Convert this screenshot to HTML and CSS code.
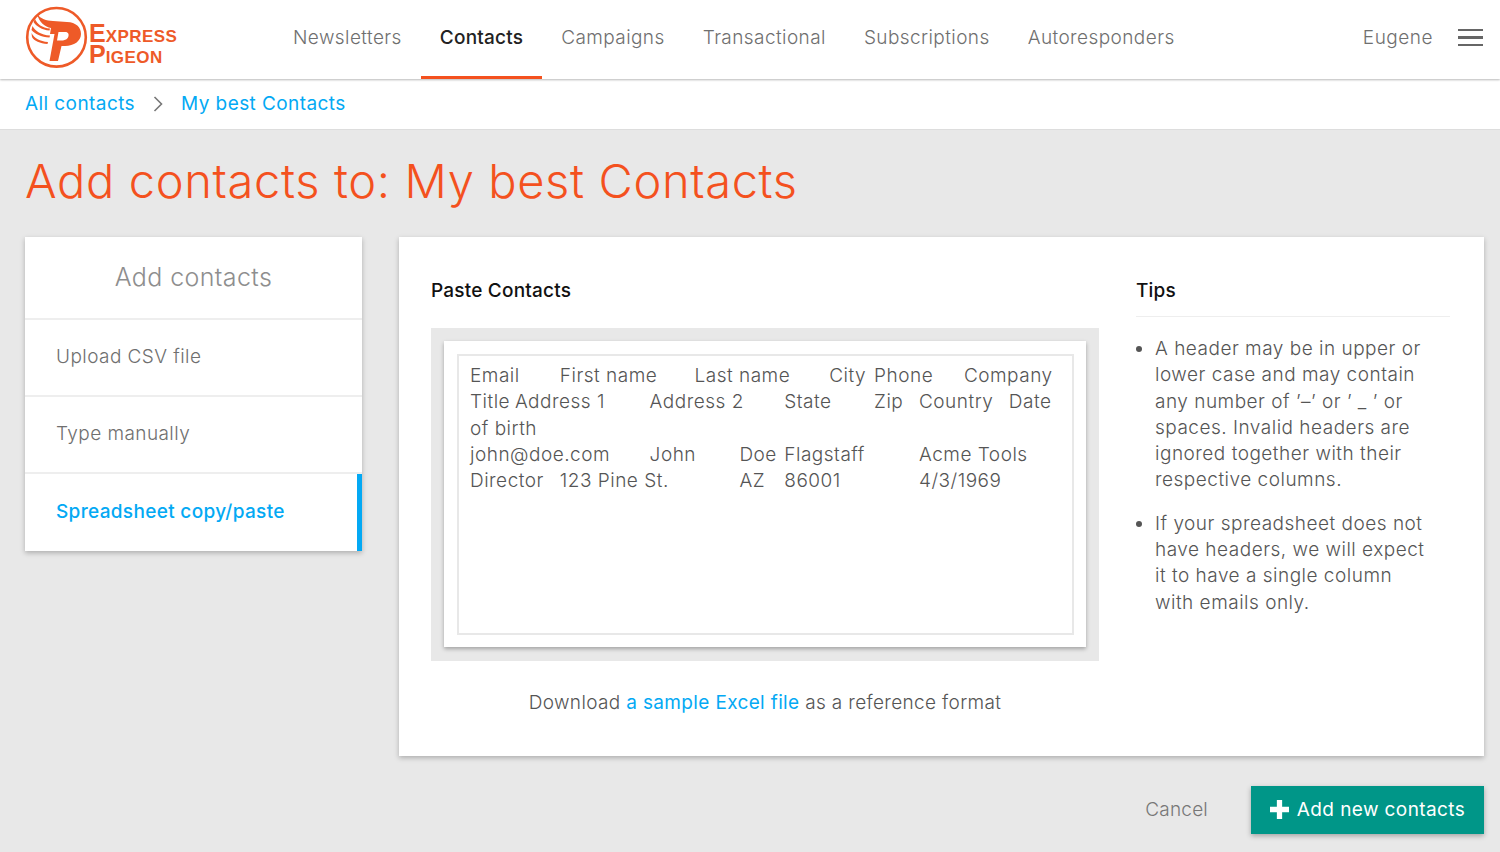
FILE: index.html
```html
<!DOCTYPE html>
<html lang="en">
<head>
<meta charset="utf-8">
<title>Add contacts</title>
<link rel="stylesheet" href="styles.css">
</head>
<body>
<header class="topbar">
  <a class="logo" href="#">
    <svg class="logo-mark" width="66" height="66" viewBox="0 0 66 66">
      <circle cx="33.5" cy="33.3" r="29.3" fill="none" stroke="#ee5a28" stroke-width="2.6"/>
      <path fill="#ee5a28" fill-rule="evenodd" d="M14 10C18 15 23 16.5 30 17L44 18C53 18.5 58 23 58 30C58 37 51 42 42 42L38.5 42L35 57L26.5 57L31.5 30L27 30L28 24C22 23 16 18 14 10ZM35.5 28L42 28C45 28 46 30 45.5 32C45 35 42 36.5 38.5 36.5L34 36.5Z"/>
      <path fill="#ee5a28" d="M12 15C14 20 19 24 27 24.5L26.5 26.5C19 26 13 22 10.5 18Z"/>
      <path fill="#ee5a28" d="M9.5 22C12 27 18 31 27 31.5L26.5 33.5C18 33 12 30 8.5 26Z"/>
      <path fill="#ee5a28" d="M8.5 29C11 34 17 37.5 25 38L24.5 40C17 39.5 11 37 9 33Z"/>
    </svg>
    <span class="logo-text"><span class="logo-line">EXPRESS</span><span class="logo-line">PIGEON</span></span>
  </a>
  <nav class="nav">
    <a class="nav-item" href="#">Newsletters</a>
    <a class="nav-item is-active" href="#">Contacts</a>
    <a class="nav-item" href="#">Campaigns</a>
    <a class="nav-item" href="#">Transactional</a>
    <a class="nav-item" href="#">Subscriptions</a>
    <a class="nav-item" href="#">Autoresponders</a>
  </nav>
  <div class="user">
    <span class="user-name">Eugene</span>
    <span class="burger"><i></i><i></i><i></i></span>
  </div>
</header>
<div class="crumbs">
  <a href="#">All contacts</a>
  <svg class="crumb-sep" width="10" height="16" viewBox="0 0 10 16"><path d="M1.5 1L8.5 8L1.5 15" fill="none" stroke="#777" stroke-width="1.6"/></svg>
  <a href="#">My best Contacts</a>
</div>
<main class="page">
  <h1 class="title">Add contacts to: My best Contacts</h1>
  <div class="columns">
    <aside class="side">
      <div class="side-head">Add contacts</div>
      <a class="side-item" href="#">Upload CSV file</a>
      <a class="side-item" href="#">Type manually</a>
      <a class="side-item is-active" href="#">Spreadsheet copy/paste</a>
    </aside>
    <section class="panel">
      <div class="paste">
        <h2 class="panel-title">Paste Contacts</h2>
        <div class="well">
          <div class="well-card">
            <textarea class="area" spellcheck="false" readonly>Email	First name	Last name	City	Phone	Company
Title	Address 1	Address 2	State	Zip	Country	Date
of birth
john@doe.com	John	Doe	Flagstaff		Acme Tools
Director	123 Pine St.		AZ	86001		4/3/1969</textarea>
          </div>
        </div>
        <p class="download">Download <a href="#">a sample Excel file</a> as a reference format</p>
      </div>
      <div class="tips">
        <h2 class="tips-title">Tips</h2>
        <ul class="tips-list">
          <li>A header may be in upper or<br>lower case and may contain<br>any number of ’–’ or ’ _ ’ or<br>spaces. Invalid headers are<br>ignored together with their<br>respective columns.</li>
          <li>If your spreadsheet does not<br>have headers, we will expect<br>it to have a single column<br>with emails only.</li>
        </ul>
      </div>
    </section>
  </div>
  <div class="actions">
    <a class="cancel" href="#">Cancel</a>
    <a class="btn" href="#"><svg width="19" height="19" viewBox="0 0 18 18"><path fill="#fff" d="M6.5 0H11.5V6.5H18V11.5H11.5V18H6.5V11.5H0V6.5H6.5Z"/></svg><span>Add new contacts</span></a>
  </div>
</main>
</body>
</html>
```
FILE: styles.css
```css
* { box-sizing: border-box; }
html, body { margin: 0; height: 100%; }
body {
  background: #e8e8e8;
  font-family: Inter, "Open Sans", sans-serif;
  font-weight: 300;
  font-size: 19px;
  letter-spacing: .5px;
  color: #555;
  overflow: hidden;
}
a { text-decoration: none; color: inherit; }

.topbar {
  height: 79px;
  background: #fff;
  display: flex;
  align-items: stretch;
  padding: 0 17px 0 25px;
  box-shadow: 0 1px 2px rgba(0,0,0,.28);
  position: relative;
}
.logo { display: flex; align-items: center; width: 249px; color: #ee5a28; padding-bottom: 5px; letter-spacing: 0; }
.logo-mark { flex: none; margin-left: -2px; }
.logo-text { display: flex; flex-direction: column; font-family: "Liberation Sans", sans-serif; font-weight: 700; font-size: 17px; margin-top: 13px; }
.logo-line { display: block; height: 21px; line-height: 21px; white-space: nowrap; letter-spacing: .45px; }
.logo-line::first-letter { font-size: 25px; letter-spacing: 0; }

.nav { display: flex; align-items: stretch; }
.nav-item {
  display: flex;
  align-items: center;
  padding: 0 19px 2px;
  letter-spacing: .42px;
  color: #6f6f6f;
  border-bottom: 3px solid transparent;
}
.nav-item.is-active { color: #222; font-weight: 500; letter-spacing: .2px; border-bottom-color: #f4511e; }

.user { margin-left: auto; display: flex; align-items: center; gap: 25px; padding-bottom: 4px; color: #6f6f6f; }
.burger { display: flex; flex-direction: column; gap: 5px; width: 25px; }
.burger i { display: block; height: 2.5px; background: #666; }

.crumbs {
  height: 51px;
  background: #fff;
  border-bottom: 1px solid #ddd;
  display: flex;
  align-items: center;
  padding: 0 25px 1px;
  gap: 18px;
  color: #03a9f4;
  font-weight: 400;
  letter-spacing: .42px;
}

.page { padding: 0 16px 0 25px; }
.title {
  margin: 0;
  height: 107px;
  padding-bottom: 6px;
  display: flex;
  align-items: center;
  font-size: 47px;
  font-weight: 300;
  color: #f4511e;
  letter-spacing: .65px;
}
.columns { display: flex; align-items: flex-start; gap: 37px; }

.side { width: 337px; background: #fff; box-shadow: 0 2px 5px rgba(0,0,0,.25); flex: none; }
.side-head {
  height: 83px;
  padding-bottom: 1px;
  display: flex;
  align-items: center;
  justify-content: center;
  font-size: 25px;
  letter-spacing: .4px;
  color: #8e8e8e;
  border-bottom: 2px solid #eee;
}
.side-item {
  height: 77px;
  display: flex;
  align-items: center;
  padding-left: 31px;
  padding-bottom: 3px;
  color: #6f6f6f;
  letter-spacing: .43px;
  border-bottom: 2px solid #eee;
}
.side-item.is-active {
  color: #03a9f4;
  font-weight: 500;
  letter-spacing: .33px;
  border-bottom: 0;
  border-right: 5px solid #03a9f4;
  padding-bottom: 3px;
}

.panel {
  flex: 1;
  height: 519px;
  background: #fff;
  box-shadow: 0 2px 5px rgba(0,0,0,.25);
  padding: 0 34px 0 32px;
  display: flex;
  gap: 37px;
}
.paste { width: 668px; flex: none; }
.panel-title, .tips-title {
  margin: 0;
  height: 80px;
  padding-top: 41px;
  font-size: 19px;
  letter-spacing: .2px;
  line-height: 26px;
  font-weight: 500;
  color: #111;
}
.panel-title { height: 91px; }
.well { background: #e8e8e8; padding: 13px 13px 14px; height: 333px; }
.well-card { background: #fff; height: 306px; padding: 12.5px; box-shadow: 0 2px 4px rgba(0,0,0,.3); }
.area {
  display: block;
  width: 100%;
  height: 100%;
  margin: 0;
  border: 2px solid #e8e8e8;
  padding: 7.5px 11.5px;
  font: inherit;
  letter-spacing: .5px;
  line-height: 26.3px;
  color: #555;
  tab-size: 44.9px;
  white-space: pre;
  overflow: hidden;
  resize: none;
  outline: 0;
}
.download { margin: 29px 0 0; text-align: center; line-height: 26px; color: #555; white-space: nowrap; letter-spacing: .35px; }
.download a { color: #03a9f4; font-weight: 400; }

.tips { flex: 1; }
.tips-title { border-bottom: 1px solid #eee; }
.tips-list { margin: 19px 0 0; padding: 0 0 0 19px; line-height: 26.3px; white-space: nowrap; color: #555; }
.tips-list li { margin-bottom: 17px; }

.actions { display: flex; justify-content: flex-end; align-items: center; gap: 43px; margin-top: 30px; }
.cancel { color: #777; letter-spacing: .2px; padding-bottom: 2px; }
.btn {
  width: 233px;
  height: 48px;
  background: #009688;
  color: #fff;
  font-weight: 400;
  letter-spacing: .4px;
  display: flex;
  align-items: center;
  justify-content: center;
  gap: 8px;
  padding-bottom: 2px;
  box-shadow: 0 2px 5px rgba(0,0,0,.3);
}
```
